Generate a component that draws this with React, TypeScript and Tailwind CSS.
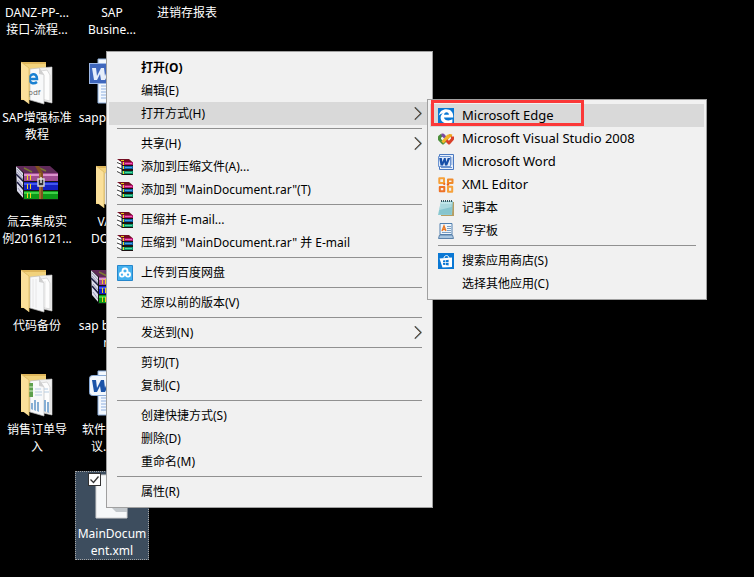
import { Fragment, type ReactNode } from "react";

/* ---------- desktop icons, 48 x 48 ---------- */

function FolderIcon({ kind }: { kind: "pdf" | "plain" | "sheet" }) {
  return (
    <svg viewBox="0 0 48 48" className="size-12">
      <path d="M8 4h25v38H8z" fill="#f1d27c" />
      <path d="M8 4h25v2H8z" fill="#dfb75c" />
      <path d="M26 10l13-1v36l-13-3z" fill="#f1f1f1" stroke="#cfcfcf" strokeWidth=".6" />
      <path d="M28 13l6-1 3 5v26l-9-2z" fill="#fdfdfd" stroke="#c4c4c4" strokeWidth=".6" />
      <path d="M17 11l9-1 5 7v29l-14-4z" fill="#f8f9fa" stroke="#bdbdbd" strokeWidth=".7" />
      <path d="M26 10v6l5 1z" fill="#cfcfcf" />
      {kind === "pdf" && (
        <>
          <path d="M16.500 21h7.500c0-7-8-6-7.500 1 1 4 5 4 7.500 2" fill="none" stroke="#1980d2" strokeWidth="2.500" />
          <text x="15" y="37" fontSize="8" fill="#6a6a6a" fontFamily="Open Sans, sans-serif">pdf</text>
        </>
      )}
      {kind === "sheet" && (
        <>
          <path d="M16 13h4v14h-4z" fill="#5da04d" />
          <path d="M16 17h4M16 21h4" stroke="#d7edcf" />
          <path d="M18 39v-6h2v7zM21 40V30h2v11zM24 41v-9h2v10zM31 41V30h2v12zM34 42V32h2v11z" fill="#85aed4" />
          <path d="M22 19h6M22 22h7M22 25h7M31 19h4M31 22h5" stroke="#b7cde2" />
        </>
      )}
      {kind === "plain" && <path d="M20 13v28M23 13v29M32 15v26" stroke="#e2e2e2" strokeWidth=".8" />}
      <path d="M8 4l8 6v36l-8-6z" fill="#fbe09a" />
      <path d="M8 4l8 6v36" fill="none" stroke="#d9b45c" strokeWidth=".7" />
    </svg>
  );
}

function ArchiveIcon() {
  return (
    <svg viewBox="0 0 48 48" className="size-12">
      <path d="M3 4l8 8v25l-7-8z" fill="#dcdcec" />
      <path d="M4 7l6 7M4 10l6 7M5 18l5 6M5 26l5 7" stroke="#8d8da8" strokeWidth=".8" />
      <path d="M3 12l8 8M4 20l7 8" stroke="#1c1c40" strokeWidth="1.600" />
      <path d="M3 4h34l8 7H11z" fill="#5f2a58" />
      <path d="M11 6l8 4M24 5l9 4" stroke="#7c7a32" strokeWidth="1.400" />
      {[
        { y: 11, h: 8, cover: "#a04c92", light: "#dc93cd" },
        { y: 20, h: 8, cover: "#1420c0", light: "#4358ee" },
        { y: 29, h: 8, cover: "#0c9a18", light: "#3fd149" },
      ].map((book) => (
        <g key={book.y}>
          <path d={`M10 ${book.y}h35v9H10z`} fill="#151515" />
          <path d={`M11 ${book.y}h34v${book.h}H11z`} fill={book.cover} />
          <path d={`M11 ${book.y + 1}h34v2H11z`} fill={book.light} />
          <path d={`M14.500 ${book.y + 2}v5M17.500 ${book.y + 2}v5`} stroke="#f2d21f" />
        </g>
      ))}
      <path d="M22 4h4l4 7v26h-4V11z" fill="#80501f" />
      <path d="M27 11v26" stroke="#c58a45" />
      <path d="M25 17h6v7h-6z" fill="#2c2c34" stroke="#d9d9d9" strokeWidth="1.400" />
      <path d="M28 15v6" stroke="#eee" strokeWidth="1.400" />
    </svg>
  );
}

function WordFileIcon({ modern }: { modern?: boolean }) {
  return (
    <svg viewBox="0 0 48 48" className="size-12">
      <path d="M10 1h30v44H10z" fill="#f3f8fe" stroke="#8fb0dc" />
      <path d="M13 28h20M13 31h20M13 34h20M13 37h20M13 40h20" stroke="#8fb0e0" />
      <rect x="1.500" y="5.500" width="25" height="20" rx={modern ? 3 : 0} fill={modern ? "#f2f7fd" : "#3f67bd"} stroke={modern ? "#87a9d6" : "#9db8e6"} />
      <path d="M4 10h4l1 8 4-8h3l1 8 3-8h3l-6 12h-4l-1-6-3 6H6z" fill={modern ? "#1c54a8" : "#e6eefb"} />
    </svg>
  );
}

function BlankFileIcon() {
  return (
    <svg viewBox="0 0 48 48" className="size-12">
      <path d="M8 1h31v43H8z" fill="#f6f8f9" stroke="#d2d2d2" />
      <path d="M24 34h15v4H28z" fill="#c3c8cc" />
    </svg>
  );
}

/* ---------- menu icons, 16 x 16 ---------- */

function BooksIcon() {
  return (
    <svg viewBox="0 0 16 16" className="size-4">
      <path d="M0 1l5 3v12l-5-2z" fill="#fff" />
      <path d="M0 3.500l5 2M0 8l5 2M0 12.500l5 2.500" stroke="#222" strokeWidth=".9" />
      <path d="M0 0h12l4 3.500H5z" fill="#730d22" />
      <path d="M4.500 3H16v13H4.500z" fill="#1b1111" />
      {[
        { y: 3, cover: "#b3126d", light: "#ee64b0" },
        { y: 7, cover: "#0c5fa6", light: "#42a3e6" },
        { y: 12, cover: "#0d9467", light: "#4bd8a5" },
      ].map((book) => (
        <g key={book.y}>
          <path d={`M5 ${book.y}h11v3H5z`} fill={book.cover} />
          <path d={`M8 ${book.y + 1.5}h7`} stroke={book.light} />
          <path d={`M6.500 ${book.y}v3`} stroke="#f5e31c" />
        </g>
      ))}
      <path d="M4 1.500h3" stroke="#e5cf1c" />
    </svg>
  );
}

function CloudIcon() {
  return (
    <svg viewBox="0 0 16 16" className="size-4">
      <path d="M.5.5h15v15H.5z" fill="#45b1ef" stroke="#2687cc" />
      <g fill="#45b1ef" stroke="#fff" strokeWidth="1.800">
        <circle cx="8" cy="6" r="2.500" />
        <circle cx="5" cy="9.600" r="2.100" />
        <circle cx="11" cy="9.600" r="2.100" />
      </g>
      <path d="M6 8.600l4 2" stroke="#fff" strokeWidth="1.500" />
    </svg>
  );
}

function EdgeIcon() {
  return (
    <svg viewBox="0 0 16 16" className="size-4">
      <path d="M0 0h16v16H0z" fill="#0a78d4" />
      <path d="M.8 7.600C1.600 3.400 4.600 1.200 8.200 1.200c4.300 0 7 2.900 7 6.800v1.600H6c.2 2 2 2.800 4.400 2.800 1.500 0 2.800-.4 4-1.100v3.100c-1.400.8-3 1.100-4.800 1.100-4.300 0-7-2.400-7-6 0-2 1.100-3.700 2.900-4.600-2 .4-3.700 1.400-4.700 2.700zm5.200-.8h4.900c0-1.700-.8-2.600-2.400-2.600-1.300 0-2.300 1-2.500 2.600z" fill="#fff" />
    </svg>
  );
}

function VisualStudioIcon() {
  return (
    <svg viewBox="0 0 16 16" className="size-4" fill="none" strokeWidth="3" strokeLinejoin="round">
      <path d="M7.500 9.500L5 12 1.500 8.500V6L4 4" stroke="#4c8f3a" />
      <path d="M3.500 4.300L5 4l4 4.500" stroke="#7b4ba1" />
      <path d="M8.500 8l3-3.500L14 5" stroke="#f0a51d" />
      <path d="M14.500 5.500V8L11 12 7 8" stroke="#d9402a" />
      <path d="M4.500 11.500l6-7" stroke="#f0b52a" />
    </svg>
  );
}

function WordIcon() {
  return (
    <svg viewBox="0 0 16 16" className="size-4">
      <path d="M1.500.5h14v15h-14z" fill="#e8f0fb" stroke="#4a78c0" />
      <path d="M12 4h2.500M12 6h2.500M12 8h2.500M12 10h2.500M3 13.500h11" stroke="#6c94cf" />
      <path d="M.5 2.500h12v10H.5z" fill="#dfeafa" stroke="#6d95d2" />
      <path d="M1.200 4h2.600l.6 4L6 4h1.700l.6 4L9.700 4h2.500l-3 7.500H7L6.300 8.200 5 11.500H2.600z" fill="#174fa8" />
    </svg>
  );
}

function OfficeIcon() {
  return (
    <svg viewBox="0 0 16 16" className="size-4" fill="none" strokeWidth="2" strokeLinejoin="round">
      <path d="M1.300 1.300h4.700V6H1.300z" stroke="#f6a13a" />
      <path d="M10 2.500h4.500V6H10z" stroke="#f08a2a" />
      <path d="M1.800 10h4.500v4.300H1.800z" stroke="#ee7226" />
      <path d="M10 9.800h4.200v5H10z" stroke="#f6a13a" />
      <path d="M5.500 6.500l1.500 1M9 8l2-1" stroke="#e8601c" />
    </svg>
  );
}

function NotepadIcon() {
  return (
    <svg viewBox="0 0 16 16" className="size-4">
      <path d="M4 2h12v14H3z" fill="#b79e63" />
      <path d="M3 1h12l-1 14H0z" fill="#8ecbd3" />
      <path d="M3 2h11l-.5 5L1.500 10z" fill="#bfe5e8" />
      <path d="M3 5h11M2.500 7h11.200M2 9h11.500M1.700 11h11.500M1.300 13H13" stroke="#6fb0bc" strokeWidth=".5" />
      <path d="M3.500 0v2M5.500 0v2M7.500 0v2M9.500 0v2M11.500 0v2M13.500 0v2" stroke="#39545c" />
    </svg>
  );
}

function WordpadIcon() {
  return (
    <svg viewBox="0 0 16 16" className="size-4">
      <path d="M2 .5h12v11H2z" fill="#edf5fc" stroke="#517fae" />
      <path d="M1.500 12h13l1 3.500H.5z" fill="#a8c6e0" stroke="#5b82ab" />
      <path d="M4 8l2-5 2 5M5 6.500h2.500" fill="none" stroke="#ea7823" strokeWidth="1.400" />
      <path d="M9 3.500h4M9 5.500h4M9 7.500h4M4 9.500h9" stroke="#7c9fc2" />
    </svg>
  );
}

function StoreIcon() {
  return (
    <svg viewBox="0 0 16 16" className="size-4">
      <path d="M0 0h16v16H0z" fill="#0a78d4" />
      <path d="M1.500 5.500L14 4.500v9.500l-9.500.5z" fill="#fff" />
      <path d="M6 5c.2-3 4.500-3.500 5 0" fill="none" stroke="#fff" />
      <path d="M5 7.500l2-.2v2H5zM7.600 7.200l3-.4v2.500h-3zM5 10h2v2l-2-.2zM7.600 10h3v2.500l-3-.4z" fill="#0a78d4" />
    </svg>
  );
}

/* ---------- desktop ---------- */

type DesktopItem = { icon?: ReactNode; lines: string[]; selected?: boolean };

const columns: DesktopItem[][] = [
  [
    { lines: ["DANZ-PP-...", "接口-流程..."] },
    { icon: <FolderIcon kind="pdf" />, lines: ["SAP增强标准", "教程"] },
    { icon: <ArchiveIcon />, lines: ["氚云集成实", "例2016121..."] },
    { icon: <FolderIcon kind="plain" />, lines: ["代码备份"] },
    { icon: <FolderIcon kind="sheet" />, lines: ["销售订单导", "入"] },
  ],
  [
    { lines: ["SAP", "Busine..."] },
    { icon: <WordFileIcon />, lines: ["sapp接口文."] },
    { icon: <FolderIcon kind="plain" />, lines: ["VAT...", "DOCS..."] },
    { icon: <ArchiveIcon />, lines: ["sap busines", "m.."] },
    { icon: <WordFileIcon modern />, lines: ["软件开发协", "议.docx"] },
    { icon: <BlankFileIcon />, lines: ["MainDocum", "ent.xml"], selected: true },
  ],
  [{ lines: ["进销存报表"] }],
];

function Shortcut({ item }: { item: DesktopItem }) {
  const label = item.lines.map((line) => (
    <span key={line} className="block whitespace-nowrap">{line}</span>
  ));
  if (!item.icon) {
    return (
      <button className="mb-4 block h-[39px] w-full pt-1 text-center">
        <span className="block h-full">{label}</span>
      </button>
    );
  }
  return (
    <div className="relative h-[104px]">
      <button
        className={
          item.selected
            ? "flex h-[89px] w-full flex-col items-center gap-[3px] bg-[#3d4d5e] pt-[3px] outline-1 -outline-offset-1 outline-dotted outline-[#a5a5a5]"
            : "flex h-[89px] w-full flex-col items-center gap-[3px] pt-[3px]"
        }
      >
        {item.icon}
        <span className="block">{label}</span>
      </button>
      {item.selected && (
        <label className="absolute top-[2px] left-[13px] block size-[13px]">
          <input type="checkbox" defaultChecked aria-label={item.lines.join("")} className="block size-[13px] appearance-none border border-[#333] bg-white" />
          <svg viewBox="0 0 13 13" className="pointer-events-none absolute inset-0 size-[13px]">
            <path d="M2.500 6.500l3 3 5-6" fill="none" stroke="#333" strokeWidth="1.300" />
          </svg>
        </label>
      )}
    </div>
  );
}

/* ---------- menus ---------- */

type MenuEntry = { label: string; icon?: ReactNode; bold?: boolean; active?: boolean; submenu?: boolean; latin?: boolean };

const mainMenu: MenuEntry[][] = [
  [
    { label: "打开(O)", bold: true },
    { label: "编辑(E)" },
    { label: "打开方式(H)", active: true, submenu: true },
  ],
  [
    { label: "共享(H)", submenu: true },
    { label: "添加到压缩文件(A)...", icon: <BooksIcon /> },
    { label: '添加到 "MainDocument.rar"(T)', icon: <BooksIcon /> },
  ],
  [
    { label: "压缩并 E-mail...", icon: <BooksIcon /> },
    { label: '压缩到 "MainDocument.rar" 并 E-mail', icon: <BooksIcon /> },
  ],
  [{ label: "上传到百度网盘", icon: <CloudIcon /> }],
  [{ label: "还原以前的版本(V)" }],
  [{ label: "发送到(N)", submenu: true }],
  [{ label: "剪切(T)" }, { label: "复制(C)" }],
  [{ label: "创建快捷方式(S)" }, { label: "删除(D)" }, { label: "重命名(M)" }],
  [{ label: "属性(R)" }],
];

const openWithMenu: MenuEntry[][] = [
  [
    { label: "Microsoft Edge", icon: <EdgeIcon />, active: true, latin: true },
    { label: "Microsoft Visual Studio 2008", icon: <VisualStudioIcon />, latin: true },
    { label: "Microsoft Word", icon: <WordIcon />, latin: true },
    { label: "XML Editor", icon: <OfficeIcon />, latin: true },
    { label: "记事本", icon: <NotepadIcon /> },
    { label: "写字板", icon: <WordpadIcon /> },
  ],
  [{ label: "搜索应用商店(S)", icon: <StoreIcon /> }, { label: "选择其他应用(C)" }],
];

function Menu({ groups }: { groups: MenuEntry[][] }) {
  return (
    <div role="menu" className="border border-[#a0a0a0] bg-[#f1f1f1] px-0.5 py-1 text-black">
      {groups.map((group, index) => (
        <Fragment key={index}>
          {index > 0 && <hr className="mx-2 my-[3px] border-[#919191]" />}
          {group.map((entry) => (
            <button
              key={entry.label}
              role="menuitem"
              className={`flex h-[23px] w-full items-center gap-2 px-2 text-left ${entry.active ? "bg-[#d9d9d9]" : ""} ${entry.bold ? "font-bold" : ""} ${entry.latin ? "text-[13px]" : ""}`}
            >
              <span className="size-4 shrink-0">{entry.icon}</span>
              <span className="grow whitespace-nowrap">{entry.label}</span>
              {entry.submenu && (
                <svg viewBox="0 0 8 14" className="h-3.5 w-2" fill="none">
                  <path d="M.8.3L7 6.500 .8 12.700" stroke="#4a3520" strokeWidth="1.200" />
                  <path d="M1.800.3L8 6.500 1.800 12.700" stroke="#5aa5dc" strokeWidth=".5" />
                </svg>
              )}
            </button>
          ))}
        </Fragment>
      ))}
    </div>
  );
}

export default function App() {
  return (
    <main className="relative h-screen overflow-hidden bg-black font-['Noto_Sans','Noto_Sans_CJK_SC',sans-serif] text-xs leading-[17px]">
      <div className="flex gap-px text-white">
        {columns.map((items, index) => (
          <div key={index} className="w-[74px]">
            {items.map((item) => (
              <Shortcut key={item.lines[0]} item={item} />
            ))}
          </div>
        ))}
      </div>
      <div className="absolute top-[51px] left-[106px] w-[327px]">
        <Menu groups={mainMenu} />
      </div>
      <div className="absolute top-[99px] left-[427px] w-[280px]">
        <Menu groups={openWithMenu} />
        <div className="pointer-events-none absolute top-px left-1 h-[26px] w-[153px] border-3 border-[#fb3838]" />
      </div>
    </main>
  );
}
